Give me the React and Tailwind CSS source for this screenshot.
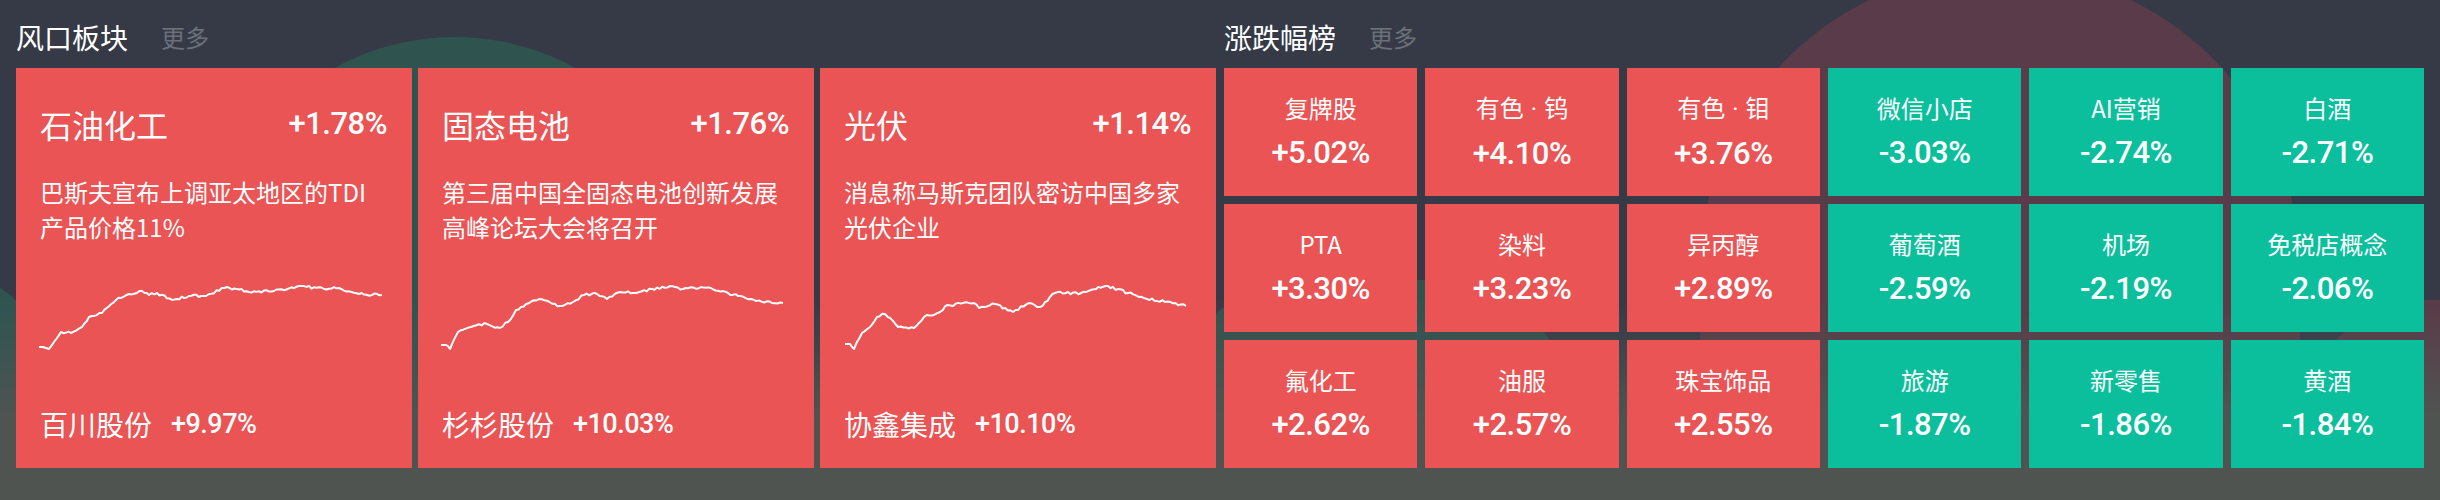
import React from "react";

const cjk = { fontFamily: '"Noto Sans CJK SC", "Noto Sans", sans-serif' };
const num = { fontFamily: 'Roboto, "Noto Sans CJK SC", sans-serif' };

const cards = [
  {
    name: "石油化工",
    pct: "+1.78%",
    desc: "巴斯夫宣布上调亚太地区的TDI产品价格11%",
    stock: "百川股份",
    stockPct: "+9.97%",
    refLeft: 17,
    seed: 11,
    keys: [
      [40, 347], [44, 347], [50, 349], [55, 342], [62, 332], [72, 333], [83, 327],
      [90, 317], [103, 313], [117, 300], [130, 294], [143, 291], [150, 295], [158, 293],
      [173, 300], [190, 296], [207, 296], [228, 287], [250, 292], [275, 291], [300, 286],
      [325, 289], [340, 288], [360, 294], [383, 295],
    ],
  },
  {
    name: "固态电池",
    pct: "+1.76%",
    desc: "第三届中国全固态电池创新发展高峰论坛大会将召开",
    stock: "杉杉股份",
    stockPct: "+10.03%",
    refLeft: 420,
    seed: 29,
    keys: [
      [443, 345], [448, 345], [452, 349], [460, 332], [473, 327], [489, 324], [502, 328],
      [510, 322], [518, 310], [541, 299], [562, 306], [575, 302], [586, 295], [599, 294],
      [609, 299], [622, 292], [638, 293], [654, 289], [672, 286], [685, 289], [703, 287],
      [730, 293], [753, 299], [774, 303], [785, 303],
    ],
  },
  {
    name: "光伏",
    pct: "+1.14%",
    desc: "消息称马斯克团队密访中国多家光伏企业",
    stock: "协鑫集成",
    stockPct: "+10.10%",
    refLeft: 821,
    seed: 47,
    keys: [
      [846, 344], [851, 344], [855, 349], [863, 333], [871, 327], [878, 317], [886, 314],
      [899, 327], [915, 328], [925, 317], [941, 312], [949, 305], [975, 303], [980, 308],
      [996, 304], [1014, 312], [1030, 303], [1041, 307], [1056, 293], [1082, 293],
      [1092, 290], [1109, 286], [1129, 293], [1145, 298], [1166, 302], [1187, 306],
    ],
  },
];

// [label, sub label after the dot, pct, up]
const tiles = [
  ["复牌股", null, "+5.02%", true], ["有色", "钨", "+4.10%", true], ["有色", "钼", "+3.76%", true],
  ["微信小店", null, "-3.03%", false], ["AI营销", null, "-2.74%", false], ["白酒", null, "-2.71%", false],
  ["PTA", null, "+3.30%", true], ["染料", null, "+3.23%", true], ["异丙醇", null, "+2.89%", true],
  ["葡萄酒", null, "-2.59%", false], ["机场", null, "-2.19%", false], ["免税店概念", null, "-2.06%", false],
  ["氟化工", null, "+2.62%", true], ["油服", null, "+2.57%", true], ["珠宝饰品", null, "+2.55%", true],
  ["旅游", null, "-1.87%", false], ["新零售", null, "-1.86%", false], ["黄酒", null, "-1.84%", false],
];

// small seeded random so the sparkline jitter is stable
function rng(seed) {
  let a = seed;
  return () => {
    a |= 0;
    a = (a + 0x6d2b79f5) | 0;
    let t = Math.imul(a ^ (a >>> 15), 1 | a);
    t = (t + Math.imul(t ^ (t >>> 7), 61 | t)) ^ t;
    return ((t ^ (t >>> 14)) >>> 0) / 4294967296;
  };
}

function sparkPoints(keys, seed, refLeft) {
  const r = rng(seed);
  const ox = refLeft + 24;
  const oy = 68 + 205;
  const pts = [];
  for (let i = 0; i < keys.length - 1; i++) {
    const [x0, y0] = keys[i];
    const [x1, y1] = keys[i + 1];
    const steps = Math.max(1, Math.round((x1 - x0) / 2.5));
    for (let s = 0; s < steps; s++) {
      const t = s / steps;
      const x = x0 + (x1 - x0) * t;
      const y = y0 + (y1 - y0) * t + (i > 0 && s > 0 ? (r() - 0.5) * 2.8 : 0);
      pts.push(`${(x - ox).toFixed(1)},${(y - oy).toFixed(1)}`);
    }
  }
  const [lx, ly] = keys[keys.length - 1];
  pts.push(`${lx - ox},${ly - oy}`);
  return pts.join(" ");
}

const SectionTitle = ({ title }) => (
  <div className="flex items-center h-9 mb-[13px]" style={cjk}>
    <span className="text-[28px] leading-9 text-white">{title}</span>
    <span className="ml-[33px] text-[24px] leading-9 text-[#6c707a]">更多</span>
  </div>
);

const HotCard = ({ card }) => (
  <div className="flex flex-col h-[400px] bg-[#ea5455] pl-6 pr-[25px] pt-9 pb-[26px] text-white">
    <div className="flex items-center justify-between h-10">
      <span className="text-[32px] leading-10" style={cjk}>
        {card.name}
      </span>
      <span className="text-[31px] leading-10 font-medium tracking-[-0.5px]" style={num}>
        {card.pct}
      </span>
    </div>
    <p className="mt-[30px] w-[344px] text-[24px] leading-[35px]" style={cjk}>
      {card.desc}
    </p>
    <svg className="mt-[29px] overflow-visible" width="348" height="90">
      <polyline
        points={sparkPoints(card.keys, card.seed, card.refLeft)}
        fill="none"
        stroke="#ffffff"
        strokeWidth="2"
        strokeLinejoin="round"
      />
    </svg>
    <div className="mt-auto flex items-center h-9">
      <span className="text-[28px] leading-9" style={cjk}>
        {card.stock}
      </span>
      <span className="ml-[19px] text-[27px] leading-9 font-medium tracking-[-0.5px]" style={num}>
        {card.stockPct}
      </span>
    </div>
  </div>
);

const Tile = ({ label, sub, pct, up }) => (
  <div
    className={`flex flex-col items-center justify-center gap-3 h-[128px] text-white ${
      up ? "bg-[#ea5455]" : "bg-[#0bbf9d]"
    }`}
  >
    <span className="text-[24px] leading-[30px]" style={cjk}>
      {label}
      {sub && (
        <>
          <span className="mx-[7px]" style={num}>
            ·
          </span>
          {sub}
        </>
      )}
    </span>
    <span className="text-[31px] leading-9 font-medium tracking-[-0.5px]" style={num}>
      {pct}
    </span>
  </div>
);

export default function App() {
  return (
    <div className="relative w-[2440px] h-[500px] overflow-hidden bg-[#353a46]">
      {/* background blobs */}
      <div className="absolute left-[205px] top-[37px] w-[500px] h-[500px] rounded-full bg-[#2f5450]" />
      <div className="absolute left-[-170px] top-[270px] w-[220px] h-[220px] rounded-full bg-[#2f5450]" />
      <div className="absolute left-[1160px] top-[280px] w-[420px] h-[300px] rounded-full bg-[#2f5450]" />
      <div className="absolute left-[1700px] top-[-30px] w-[600px] h-[660px] rounded-full bg-[#5a3b49]" />
      <div className="absolute left-[2300px] top-[300px] w-[300px] h-[260px] rounded-full bg-[#5a3b49]" />
      <div className="absolute inset-x-0 top-[300px] bottom-0 bg-gradient-to-b from-transparent via-[#4f5451] via-60% to-[#4f5451]" />

      <div className="relative flex gap-2 px-4 pt-[19px]">
        <section className="w-[1200px]">
          <SectionTitle title="风口板块" />
          <div className="grid grid-cols-3 gap-[6px]">
            {cards.map((c) => (
              <HotCard key={c.name} card={c} />
            ))}
          </div>
        </section>
        <section className="w-[1200px]">
          <SectionTitle title="涨跌幅榜" />
          <div className="grid grid-cols-6 gap-2">
            {tiles.map(([label, sub, pct, up]) => (
              <Tile key={label + (sub || "")} label={label} sub={sub} pct={pct} up={up} />
            ))}
          </div>
        </section>
      </div>
    </div>
  );
}
